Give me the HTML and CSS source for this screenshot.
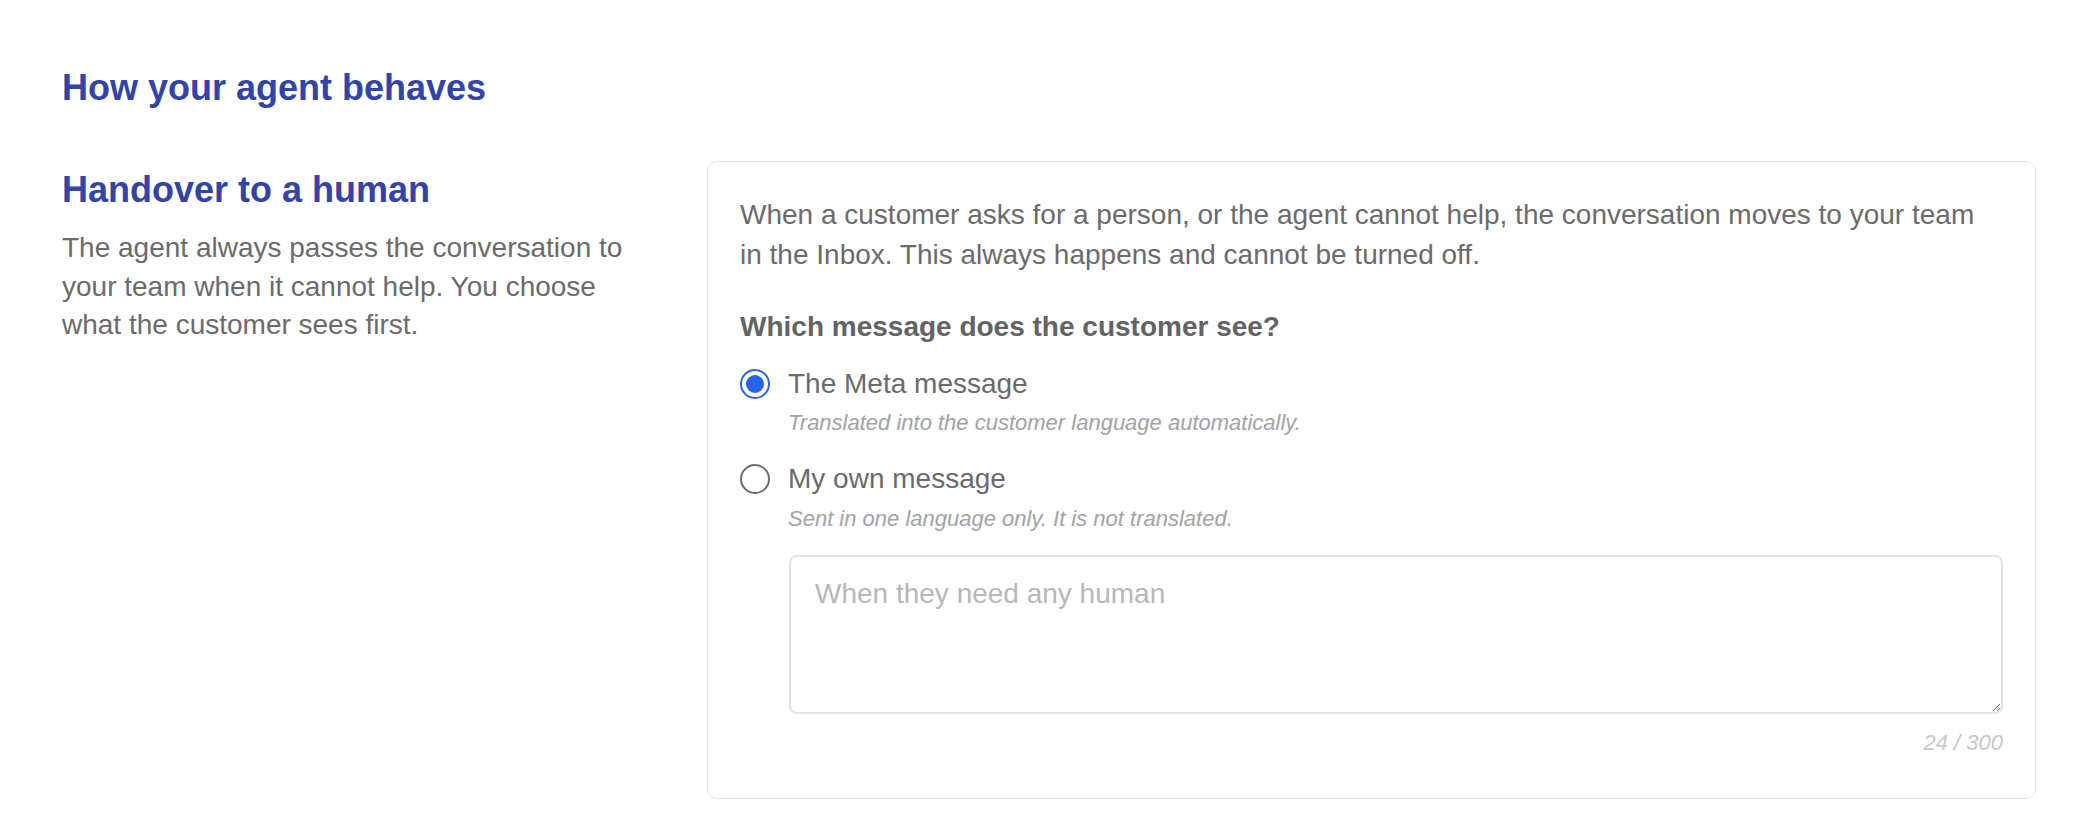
FILE: index.html
```html
<!DOCTYPE html>
<html lang="en">
<head>
<meta charset="utf-8">
<title>How your agent behaves</title>
<link rel="stylesheet" href="styles.css">
</head>
<body>
<main class="page">
  <h1 class="page-title">How your agent behaves</h1>
  <section class="setting">
    <div class="setting-intro">
      <h2 class="setting-title">Handover to a human</h2>
      <p class="setting-desc">The agent always passes the conversation to your team when it cannot help. You choose what the customer sees first.</p>
    </div>
    <div class="card">
      <p class="card-desc">When a customer asks for a person, or the agent cannot help, the conversation moves to your team in the Inbox. This always happens and cannot be turned off.</p>
      <div class="question">Which message does the customer see?</div>
      <div class="options">
        <label class="option">
          <span class="option-row">
            <input class="radio" type="radio" name="handover" checked>
            <span class="option-label">The Meta message</span>
          </span>
          <span class="option-hint">Translated into the customer language automatically.</span>
        </label>
        <label class="option">
          <span class="option-row">
            <input class="radio" type="radio" name="handover">
            <span class="option-label">My own message</span>
          </span>
          <span class="option-hint">Sent in one language only. It is not translated.</span>
        </label>
      </div>
      <div class="message-field">
        <textarea class="message-input" placeholder="When they need any human"></textarea>
        <div class="counter">24 / 300</div>
      </div>
    </div>
  </section>
</main>
</body>
</html>
```

FILE: styles.css
```css
* {
  box-sizing: border-box;
}

html, body {
  margin: 0;
  padding: 0;
  background: #ffffff;
}

body {
  font-family: "Liberation Sans", Arial, Helvetica, sans-serif;
  color: #6b6b6b;
}

.page {
  padding: 66px 48px 0 62px;
}

.page-title {
  margin: 0;
  font-size: 36px;
  line-height: 43px;
  font-weight: 700;
  color: #3343a7;
}

.setting {
  display: grid;
  grid-template-columns: 590px 1fr;
  column-gap: 55px;
  margin-top: 52px;
  align-items: start;
}

.setting-intro {
  padding-top: 7px;
}

.setting-title {
  margin: 0;
  font-size: 36px;
  line-height: 43px;
  font-weight: 700;
  color: #3343a7;
}

.setting-desc {
  margin: 18px 0 0;
  font-size: 28px;
  line-height: 38.5px;
  color: #6b6b6b;
}

.card {
  border: 1px solid #e4e4e7;
  border-radius: 10px;
  padding: 33px 32px 40px 32px;
  background: #ffffff;
}

.card-desc {
  margin: 0;
  max-width: 1245px;
  font-size: 28px;
  line-height: 39.5px;
  color: #6b6b6b;
}

.question {
  margin-top: 34px;
  font-size: 28px;
  line-height: 38.5px;
  font-weight: 700;
  color: #636363;
}

.options {
  display: flex;
  flex-direction: column;
  gap: 22px;
  margin-top: 18px;
}

.option {
  display: flex;
  flex-direction: column;
  cursor: pointer;
}

.option-row {
  display: flex;
  align-items: center;
  gap: 18px;
}

.radio {
  appearance: none;
  -webkit-appearance: none;
  margin: 0;
  width: 30px;
  height: 30px;
  flex: none;
  border: 2px solid #6b6b6b;
  border-radius: 50%;
  background: #ffffff;
  display: grid;
  place-items: center;
}

.radio:checked {
  border-color: #2563eb;
}

.radio:checked::before {
  content: "";
  width: 18px;
  height: 18px;
  border-radius: 50%;
  background: #2563eb;
}

.option-label {
  font-size: 28px;
  line-height: 38.5px;
  color: #6b6b6b;
}

.option-hint {
  margin: 5px 0 0 48px;
  font-size: 22px;
  line-height: 30px;
  font-style: italic;
  color: #a3a3a3;
}

.message-field {
  margin: 21px 0 0 49px;
}

.message-input {
  display: block;
  width: 100%;
  height: 159px;
  padding: 18px 24px;
  border: 2px solid #e3e3e3;
  border-radius: 8px;
  font-family: "Liberation Sans", Arial, Helvetica, sans-serif;
  font-size: 28px;
  line-height: 38.5px;
  color: #6b6b6b;
  background: #ffffff;
  resize: vertical;
  outline: none;
}

.message-input::placeholder {
  color: #b8b8b8;
}

.counter {
  margin-top: 14px;
  text-align: right;
  font-size: 22px;
  line-height: 30px;
  font-style: italic;
  color: #c8c8c8;
}
```
